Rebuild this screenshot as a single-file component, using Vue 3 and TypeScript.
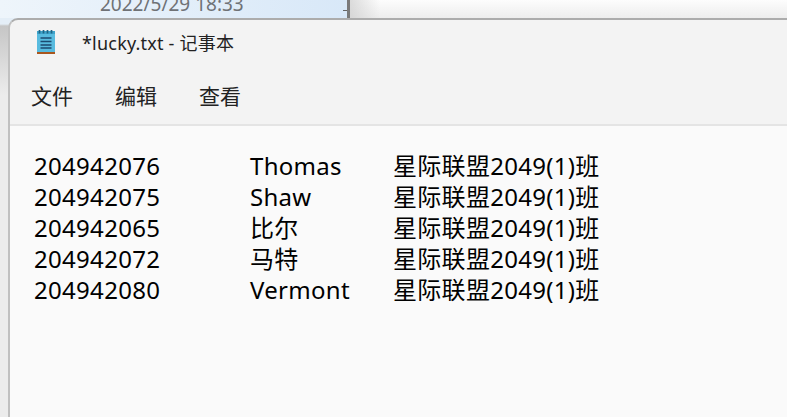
<template>
  <div class="desk">
    <div class="back">
      <div class="back-panel">
        <span class="back-date">2022/5/29 18:33</span>
        <span class="back-tick"></span>
      </div>
      <div class="back-side"></div>
    </div>
    <div class="notepad">
      <div class="titlebar">
        <svg class="app-icon" width="20" height="26" viewBox="0 0 20 26">
          <rect x="0" y="1" width="18" height="21" fill="#58bbdf" />
          <rect x="0" y="1" width="18" height="3" fill="#3ea3ca" />
          <path d="M2.5 0v3.5M6.5 0v3.5M10.5 0v3.5M14.5 0v3.5" stroke="#1f6485" stroke-width="1.7" />
          <path d="M3.5 8h11M3.5 11.5h11M3.5 15h11M3.5 18h11" stroke="#1b4a70" stroke-width="1.6" />
          <rect x="0" y="22" width="18" height="2" fill="#a9561e" />
        </svg>
        <span class="title">*lucky.txt - 记事本</span>
      </div>
      <div class="menubar">
        <span v-for="m in menus" :key="m" class="menu-item">{{ m }}</span>
      </div>
      <div class="editor">
        <div v-for="r in rows" :key="r.id" class="row">
          <span>{{ r.id }}</span>
          <span>{{ r.name }}</span>
          <span>{{ r.cls }}</span>
        </div>
      </div>
    </div>
  </div>
</template>

<script setup lang="ts">
const menus = ['文件', '编辑', '查看']

const rows = [
  { id: '204942076', name: 'Thomas', cls: '星际联盟2049(1)班' },
  { id: '204942075', name: 'Shaw', cls: '星际联盟2049(1)班' },
  { id: '204942065', name: '比尔', cls: '星际联盟2049(1)班' },
  { id: '204942072', name: '马特', cls: '星际联盟2049(1)班' },
  { id: '204942080', name: 'Vermont', cls: '星际联盟2049(1)班' }
]
</script>

<style>
html,
body {
  margin: 0;
  overflow: hidden;
}
</style>

<style scoped>
.desk {
  width: 787px;
  height: 417px;
  overflow: hidden;
  display: flex;
  flex-direction: column;
  background: linear-gradient(#e4eef7 24px, #c6c6c6 26px, #ececec 95px);
  font-family: "Noto Sans", "Noto Sans CJK SC", sans-serif;
}

.back {
  display: flex;
  height: 18px;
  flex: none;
}

.back-panel {
  width: 350px;
  height: 18px;
  box-sizing: border-box;
  padding-left: 100px;
  display: flex;
  background: linear-gradient(90deg, #eef5fb, #d8e8f8);
  border-right: 3px solid #7a7a7a;
  overflow: hidden;
  position: relative;
}

.back-date {
  font-size: 19px;
  line-height: 9px;
  color: #6f7276;
  white-space: nowrap;
}

.back-tick {
  position: absolute;
  right: 0;
  top: 10px;
  width: 4px;
  height: 1px;
  background: #666;
}

.back-side {
  flex: 1;
  background:
    linear-gradient(90deg, rgba(205, 205, 205, 0.7), rgba(255, 255, 255, 0) 30px),
    linear-gradient(#fdfdfd, #ededed);
}

.notepad {
  flex: 1;
  margin-left: 8px;
  display: flex;
  flex-direction: column;
  border-top: 2px solid #acacac;
  border-left: 2px solid #c0c0c0;
  border-top-left-radius: 10px;
  background: #f3f3f3;
  overflow: hidden;
}

.titlebar {
  height: 46px;
  display: flex;
  align-items: center;
  padding-left: 27px;
}

.app-icon {
  flex: none;
}

.title {
  margin: 0 0 2px 25px;
  font-size: 18px;
  letter-spacing: 0.2px;
  color: #222;
}

.menubar {
  height: 60px;
  box-sizing: border-box;
  display: flex;
  gap: 42px;
  padding: 12px 0 0 21px;
  border-bottom: 2px solid #e4e4e4;
}

.menu-item {
  font-size: 21px;
  line-height: 36px;
  color: #222;
}

.editor {
  flex: 1;
  background: #fafafa;
  padding: 24px 0 0 24px;
  color: #000;
  font-size: 24px;
  letter-spacing: 0.3px;
}

.row {
  display: grid;
  grid-template-columns: 216px 143px auto;
  height: 31px;
  line-height: 31px;
  white-space: nowrap;
}
</style>
